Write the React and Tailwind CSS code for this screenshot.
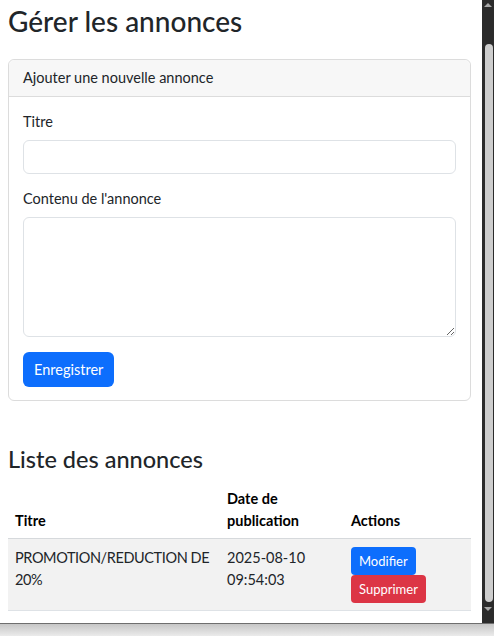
import React from "react";

// Annonces admin page — bootstrap-ish look inside a windowed frame
function Scrollbar() {
  return (
    <div className="w-[12px] bg-[#2b2b2b] flex flex-col items-center">
      <div className="h-[44px] w-full flex justify-center pt-[3px]">
        <div className="w-0 h-0 border-l-[4px] border-r-[4px] border-b-[4px] border-l-transparent border-r-transparent border-b-[#a8a8a8]" />
      </div>
      <div className="ml-[2px] w-[8px] h-[558px] rounded-t-[4px] rounded-b-[4px] bg-[#cdcdcd]" />
      <div className="flex-1 w-full flex justify-center pt-[5px]">
        <div className="w-0 h-0 border-l-[4px] border-r-[4px] border-t-[4px] border-l-transparent border-r-transparent border-t-[#a8a8a8]" />
      </div>
    </div>
  );
}

export default function App() {
  const rows = [
    { titre: "PROMOTION/REDUCTION DE 20%", date: "2025-08-10", heure: "09:54:03" },
  ];

  return (
    <div
      className="w-[494px] h-[636px] flex flex-col overflow-hidden"
      style={{ fontFamily: 'Lato, "Noto Sans", sans-serif' }}
    >
      <div className="h-[623px] flex">
        <div className="flex-1 bg-white overflow-hidden px-2 pt-[4px] text-[#212529]">
          <h1 className="text-[28px] leading-[34px] font-medium">Gérer les annonces</h1>

          <div className="mt-[21px] w-[463px] border border-[#dcdcdc] rounded-[6px]">
            <div className="h-[37px] bg-[#f7f7f7] border-b border-[#dcdcdc] rounded-t-[6px] px-[14px] text-[14.5px] leading-[36px]">
              Ajouter une nouvelle annonce
            </div>
            <div className="px-[14px] pt-[14px] pb-[13px] text-[14.5px]">
              <label className="block leading-[22px] mb-[7px]">Titre</label>
              <input
                type="text"
                className="block w-full h-[34px] border border-[#dee2e6] rounded-[6px] px-3 outline-none"
              />
              <label className="block leading-[22px] mt-[14px] mb-[7px]">Contenu de l'annonce</label>
              <textarea className="block w-full h-[120px] border border-[#dee2e6] rounded-[6px] px-3 py-1 outline-none" />
              <button className="mt-[15px] h-[35px] px-[11px] rounded-[6px] bg-[#0d6efd] text-white text-[14.5px]">
                Enregistrer
              </button>
            </div>
          </div>

          <h2 className="mt-[44px] text-[23.5px] leading-[29px] font-medium mb-[7px]">Liste des annonces</h2>

          <table className="w-[463px] table-fixed border-collapse text-[14.5px] leading-[22px]">
            <colgroup>
              <col className="w-[212px]" />
              <col className="w-[124px]" />
              <col />
            </colgroup>
            <thead>
              <tr className="border-b border-[#d6d9dc]">
                <th className="text-left align-bottom font-bold text-black px-[7px] pt-[7px] pb-[6px]">Titre</th>
                <th className="text-left align-bottom font-bold text-black px-[7px] pt-[7px] pb-[6px]">
                  Date de publication
                </th>
                <th className="text-left align-bottom font-bold text-black px-[7px] pt-[7px] pb-[6px]">Actions</th>
              </tr>
            </thead>
            <tbody>
              {rows.map((r, i) => (
                <tr key={i} className="bg-[#f2f2f2] border-b border-[#dee2e6]">
                  <td className="align-top px-[7px] pt-[8px] pb-[7px] tracking-[-0.4px]">{r.titre}</td>
                  <td className="align-top px-[7px] pt-[8px] pb-[7px]">
                    {r.date}
                    <br />
                    {r.heure}
                  </td>
                  <td className="align-top px-[7px] pt-[8px] pb-[7px]">
                    <div className="flex flex-col items-start">
                      <button className="h-[28px] px-[8px] rounded-[4px] bg-[#0d6efd] text-white text-[13px]">
                        Modifier
                      </button>
                      <button className="h-[28px] px-[8px] rounded-[4px] bg-[#dc3545] text-white text-[13px]">
                        Supprimer
                      </button>
                    </div>
                  </td>
                </tr>
              ))}
            </tbody>
          </table>
        </div>
        <Scrollbar />
      </div>
      <div className="h-[1px] bg-[#6e6e6e]" />
      <div className="flex-1 bg-gradient-to-b from-[#c6c6c6] to-[#ebebeb]" />
    </div>
  );
}
